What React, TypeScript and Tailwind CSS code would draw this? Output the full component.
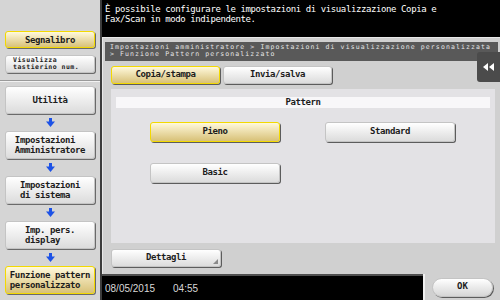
import React from "react";

const mono = "font-['DejaVu_Sans_Mono','Liberation_Mono',monospace]";

const DownArrow = () => (
  <div className="flex justify-center h-[17px] items-center">
    <svg width="9" height="9" viewBox="0 0 9 9">
      <rect x="3" y="0" width="3" height="4" fill="#1d52e6" />
      <polygon points="0,3.5 9,3.5 4.5,9" fill="#1d52e6" />
    </svg>
  </div>
);

const SideButton = ({
  lines,
  yellow = false,
  h = "h-[28px]",
}: {
  lines: string[];
  yellow?: boolean;
  h?: string;
}) => (
  <div
    className={`mx-[5px] ${h} rounded-[3px] flex items-center justify-center shadow-[1px_1px_0_#6a6a6a] ${
      yellow
        ? "border-[1.5px] border-[#f3d900] bg-gradient-to-b from-[#fff9dc] to-[#d8c177]"
        : "border border-[#c4c4c4] bg-gradient-to-b from-white to-[#dcdcdc]"
    }`}
  >
    <div className={`inline-block text-left ${mono} text-[9px] tracking-[-0.4px] leading-[10px] font-bold text-[#1c1c1c]`}>
      {lines.map((l) => (
        <div key={l}>{l}</div>
      ))}
    </div>
  </div>
);

const PanelButton = ({
  label,
  yellow = false,
  w = "w-[130px]",
  h = "h-[20px]",
  corner = false,
}: {
  label: string;
  yellow?: boolean;
  w?: string;
  h?: string;
  corner?: boolean;
}) => (
  <div
    className={`relative ${w} ${h} rounded-[3px] flex items-center justify-center shadow-[1px_1px_0_#5c5c5c] ${mono} text-[9px] tracking-[-0.4px] font-bold text-[#1c1c1c] ${
      yellow
        ? "border-[1.5px] border-[#f3d900] bg-gradient-to-b from-[#fff9dc] to-[#d8c177]"
        : "border border-[#c4c4c4] bg-gradient-to-b from-white to-[#dcdcdc]"
    }`}
  >
    {label}
    {corner && (
      <div className="absolute right-[2px] bottom-[2px] w-0 h-0 border-l-[5px] border-l-transparent border-b-[5px] border-b-[#8a8a8a]" />
    )}
  </div>
);

export default function App() {
  return (
    <div className="w-[500px] h-[300px] flex overflow-hidden bg-black">
      {/* Sidebar */}
      <div className="w-[102px] h-full bg-[#d5d5d5] border-r-2 border-[#3c3c3c] flex flex-col">
        <div className="h-[80px] flex flex-col pt-[31px] gap-[7px]">
          <SideButton lines={["Segnalibro"]} yellow h="h-[17px]" />
          <div className="mx-[5px] h-[18px] rounded-[3px] border border-[#c4c4c4] bg-gradient-to-b from-white to-[#dcdcdc] shadow-[1px_1px_0_#6a6a6a] pl-[7px] pt-[1px]">
            <div className={`${mono} text-[6.5px] leading-[7px] font-bold text-[#1c1c1c] tracking-[0.5px]`}>
              <div>Visualizza</div>
              <div>tastierino num.</div>
            </div>
          </div>
        </div>
        <div className="h-px bg-[#9a9a9a]" />
        <div className="h-px bg-[#f2f2f2]" />
        <div className="pt-[4px] flex flex-col">
          <SideButton lines={["Utilità"]} />
          <DownArrow />
          <SideButton lines={["Impostazioni", "Amministratore"]} />
          <DownArrow />
          <SideButton lines={["Impostazioni", "di sistema"]} />
          <DownArrow />
          <SideButton lines={["Imp. pers.", "display"]} />
          <DownArrow />
          <SideButton lines={["Funzione pattern", "personalizzato"]} yellow />
        </div>
      </div>

      {/* Main */}
      <div className="flex-1 flex flex-col">
        <div className={`h-[37px] bg-black text-white ${mono} text-[9px] tracking-[-0.4px] leading-[10px] pl-[3px] pt-[4px]`}>
          <div>È possibile configurare le impostazioni di visualizzazione Copia e</div>
          <div>Fax/Scan in modo indipendente.</div>
        </div>

        <div className="relative flex-1 bg-[#d0d0d0] border-t border-l border-[#e8e8e8] flex flex-col">
          <div className="mx-[2px] mt-[4px] h-[19px] bg-[#595959] text-[#e6e6e6] px-[5px] pt-[2px]">
            <div className={`${mono} text-[6.5px] leading-[7px] tracking-[1.1px]`}>
              <div>Impostazioni amministratore &gt; Impostazioni di visualizzazione personalizzata</div>
              <div>&gt; Funzione Pattern personalizzato</div>
            </div>
          </div>

          {/* collapse tab */}
          <div className="absolute right-0 top-[14px] w-[23px] h-[30px] bg-[#4b4b4b] rounded-l-[3px] flex items-center justify-center">
            <svg width="11" height="8" viewBox="0 0 11 8">
              <polygon points="5,0 5,8 0,4" fill="white" />
              <polygon points="11,0 11,8 6,4" fill="white" />
            </svg>
          </div>

          <div className="flex gap-[3px] ml-[8px] mt-[5px]">
            <PanelButton label="Copia/stampa" yellow w="w-[109px]" h="h-[18px]" />
            <PanelButton label="Invia/salva" w="w-[109px]" h="h-[18px]" />
          </div>

          <div className="ml-[8px] mr-[5px] mt-[5px] h-[154px] bg-[#e3e2e5] pt-[8px] px-[5px]">
            <div className={`h-[11px] bg-[#f8f7f9] flex items-center justify-center ${mono} text-[9px] tracking-[-0.4px] font-bold text-[#1c1c1c]`}>
              Pattern
            </div>
            <div className="grid grid-cols-[130px_130px] gap-x-[45px] gap-y-[21px] pl-[34px] pt-[14px]">
              <PanelButton label="Pieno" yellow />
              <PanelButton label="Standard" />
              <PanelButton label="Basic" />
            </div>
          </div>

          <div className="ml-[8px] mt-[6px]">
            <PanelButton label="Dettagli" w="w-[110px]" h="h-[18px]" corner />
          </div>
        </div>

        <div className="h-[26px] flex">
          <div className="flex-1 bg-black border-t-2 border-[#4e4e4e] flex items-center gap-[18px] pl-[3px] font-['Liberation_Sans',Arial,sans-serif] text-[10px] text-[#d8d8d8]">
            <span>08/05/2015</span>
            <span>04:55</span>
          </div>
          <div className="w-[77px] bg-[#d0d0d0] border-l-2 border-[#f0f0f0] flex items-center justify-center">
            <div className={`w-[61px] h-[19px] rounded-full border border-[#c4c4c4] bg-gradient-to-b from-white to-[#d6d6d6] shadow-[1px_1px_0_#5c5c5c] flex items-center justify-center ${mono} text-[9px] font-bold text-[#1c1c1c]`}>
              OK
            </div>
          </div>
        </div>
      </div>
    </div>
  );
}
